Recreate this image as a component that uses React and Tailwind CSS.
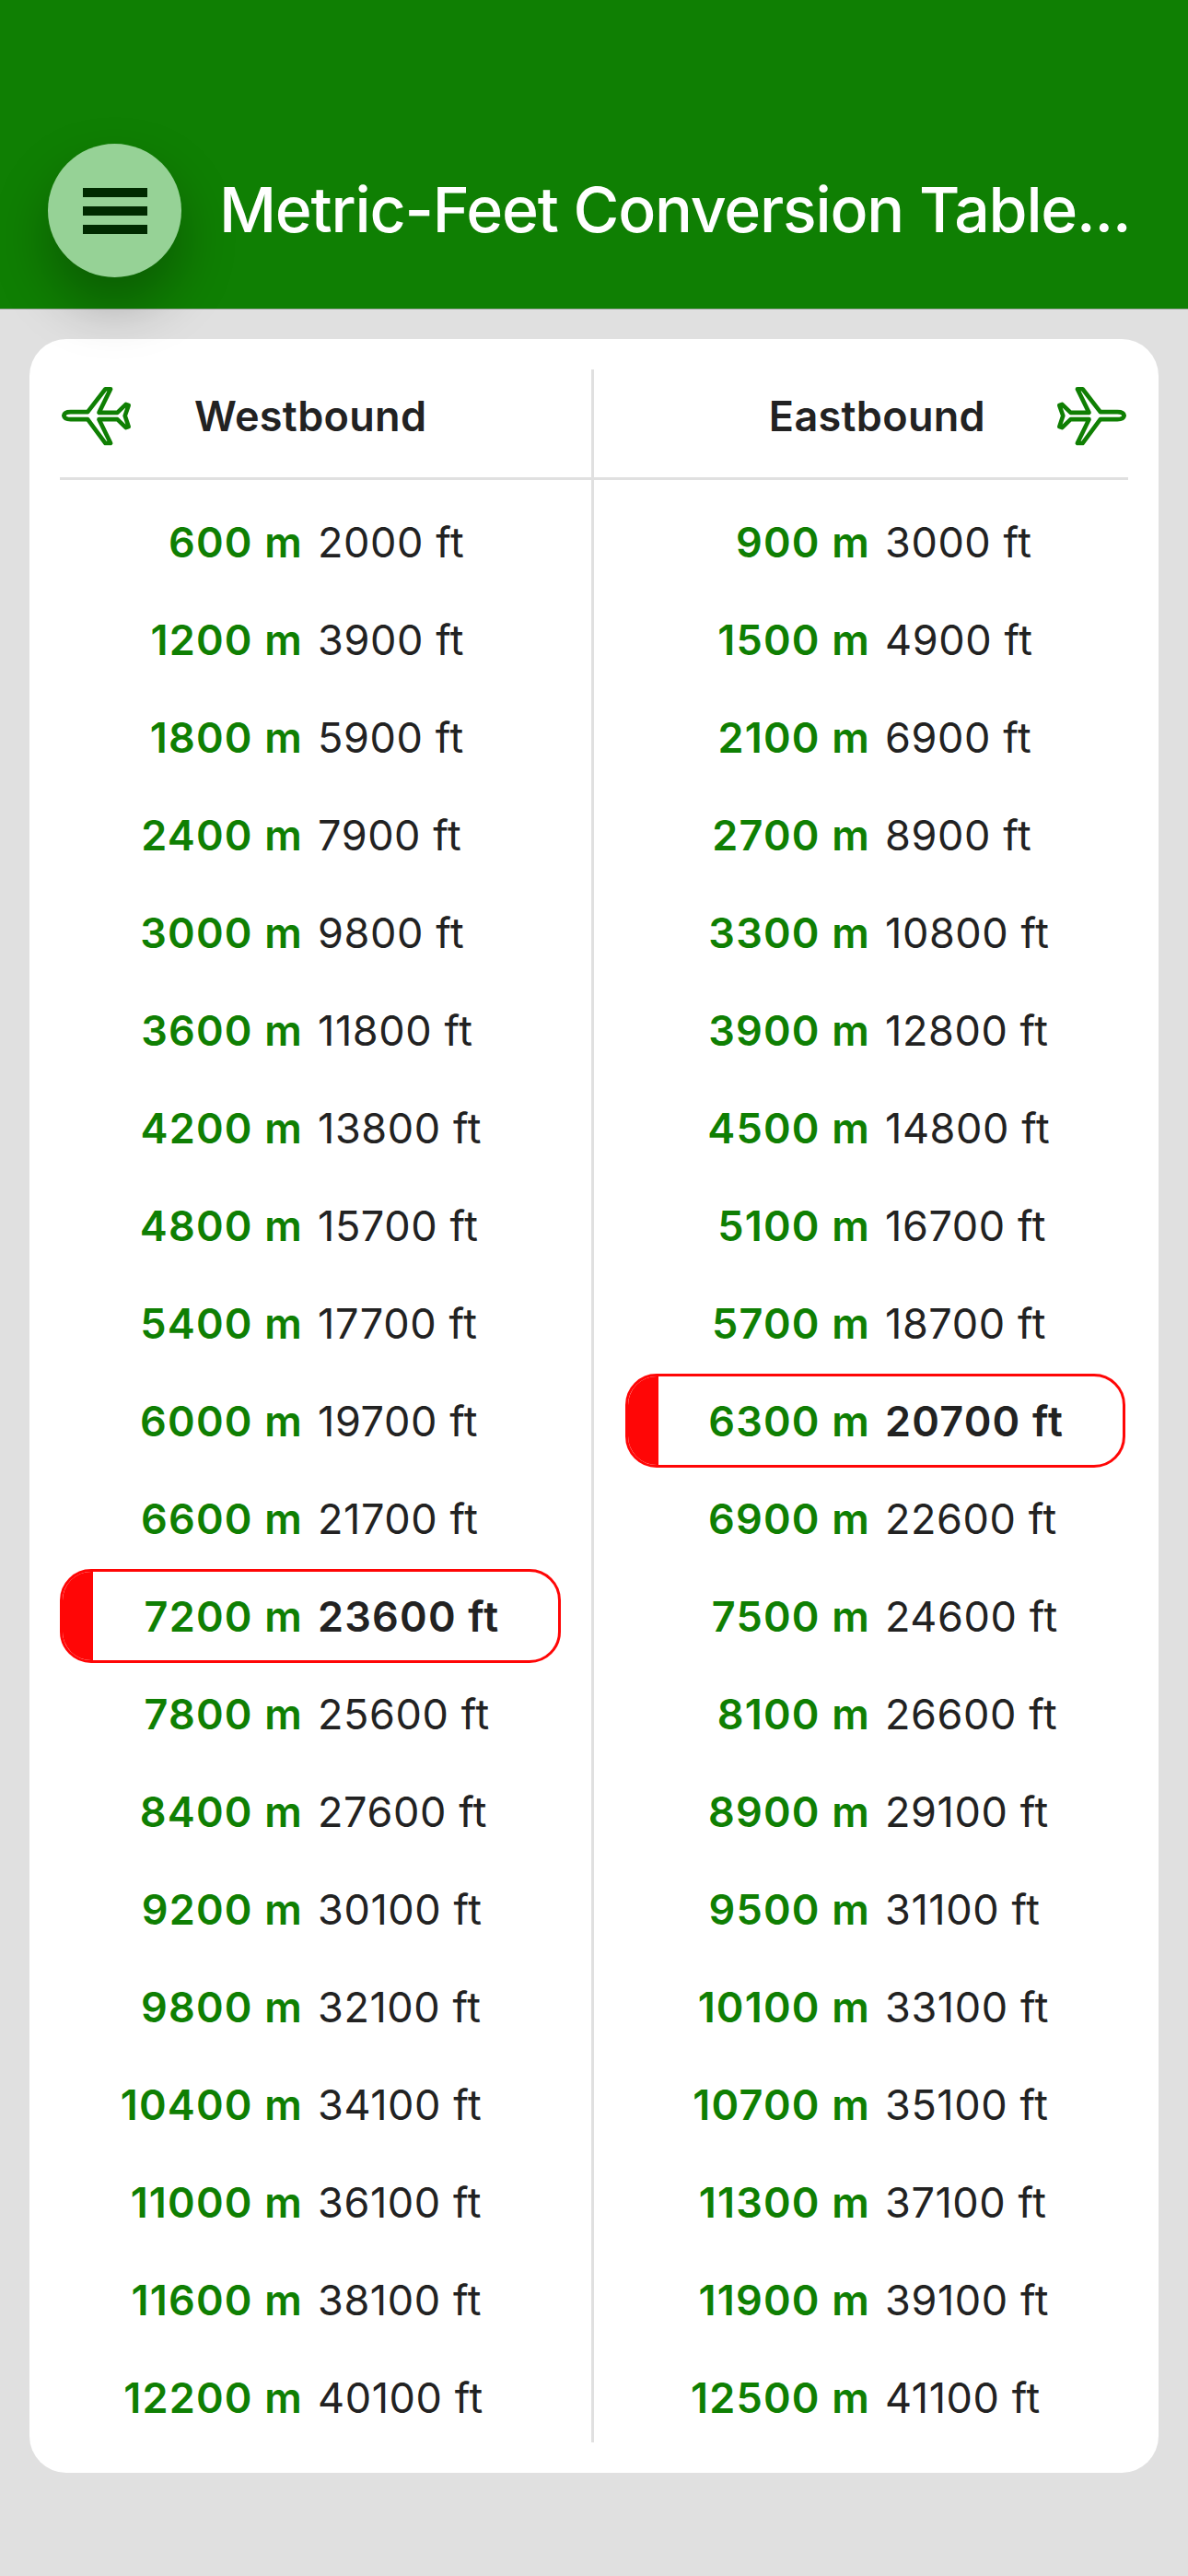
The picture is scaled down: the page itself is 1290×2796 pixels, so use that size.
const westbound = [
  ['600 m', '2000 ft'], ['1200 m', '3900 ft'], ['1800 m', '5900 ft'], ['2400 m', '7900 ft'],
  ['3000 m', '9800 ft'], ['3600 m', '11800 ft'], ['4200 m', '13800 ft'], ['4800 m', '15700 ft'],
  ['5400 m', '17700 ft'], ['6000 m', '19700 ft'], ['6600 m', '21700 ft'], ['7200 m', '23600 ft'],
  ['7800 m', '25600 ft'], ['8400 m', '27600 ft'], ['9200 m', '30100 ft'], ['9800 m', '32100 ft'],
  ['10400 m', '34100 ft'], ['11000 m', '36100 ft'], ['11600 m', '38100 ft'], ['12200 m', '40100 ft'],
];

const eastbound = [
  ['900 m', '3000 ft'], ['1500 m', '4900 ft'], ['2100 m', '6900 ft'], ['2700 m', '8900 ft'],
  ['3300 m', '10800 ft'], ['3900 m', '12800 ft'], ['4500 m', '14800 ft'], ['5100 m', '16700 ft'],
  ['5700 m', '18700 ft'], ['6300 m', '20700 ft'], ['6900 m', '22600 ft'], ['7500 m', '24600 ft'],
  ['8100 m', '26600 ft'], ['8900 m', '29100 ft'], ['9500 m', '31100 ft'], ['10100 m', '33100 ft'],
  ['10700 m', '35100 ft'], ['11300 m', '37100 ft'], ['11900 m', '39100 ft'], ['12500 m', '41100 ft'],
];

// outline of a plane pointing right, flipped for the westbound column
const Plane = ({ flip }) => (
  <svg
    viewBox="285 228 244 206"
    className={`w-[81px] h-[69px] shrink-0 ${flip ? '-scale-x-100 -ml-[2px]' : '-mr-[2px]'}`}
    fill="none"
    stroke="#0f7f03"
    strokeWidth="14"
    strokeLinejoin="round"
  >
    <path d="M510 330 Q508 318 488 318 L432 318 L374 243 L357 243 L395 320 L335 320 L307 293 L298 296 L310 330 L298 366 L307 369 L335 342 L395 342 L357 420 L374 420 L432 342 L488 342 Q508 342 510 330 Z" />
  </svg>
);

const Row = ({ metres, feet, active, columns }) => (
  <div
    className={`relative h-[102px] shrink-0 grid ${columns} gap-x-[19px] items-center rounded-[34px] overflow-hidden border-[3px] ${
      active ? 'border-[#ff0606]' : 'border-transparent'
    }`}
  >
    {active && <div className="absolute left-0 top-0 bottom-0 w-[33px] bg-[#ff0606]" />}
    <span className="text-right font-semibold text-[#0f7f03] tracking-[1.2px] -ml-[3px]">{metres}</span>
    <span className={`-ml-[3px] ${active ? 'font-semibold tracking-[1.2px]' : 'tracking-[0.6px]'}`}>{feet}</span>
  </div>
);

const App = () => {
  return (
    <div className="min-h-[2796px] bg-[#e0e0e0] text-[45px] leading-none text-[#222222] font-['Inter',sans-serif]">
      <div className="h-[336px] bg-[#0f7f03] border-b border-[#aaaaaa] flex items-end pl-[52px] pb-[34px]">
        <button className="relative z-10 w-[145px] h-[145px] rounded-full bg-[#96d296] shadow-[0_30px_60px_rgba(0,0,0,0.28)] flex flex-col items-center justify-center gap-[10px]">
          <span className="w-[70px] h-[10px] bg-[#002a00]" />
          <span className="w-[70px] h-[10px] bg-[#002a00]" />
          <span className="w-[70px] h-[10px] bg-[#002a00]" />
        </button>
        <h1 className="ml-[41px] h-[145px] pb-[3px] flex items-center text-[68px] font-medium tracking-[-1.2px] text-white whitespace-nowrap">
          Metric-Feet Conversion Table...
        </h1>
      </div>

      <div className="mx-[32px] mt-[32px] bg-white rounded-[40px] pt-[33px] pb-[33px] px-[33px] grid grid-cols-2">
        <div className="h-[2250px] border-r-[3px] border-[#e0e0e0]">
          <div className="h-[120px] border-b-[3px] border-[#e0e0e0] flex items-center pb-[16px]">
            <Plane flip />
            <span className="ml-[67px] font-semibold tracking-[0.3px]">Westbound</span>
          </div>
          <div className="pt-[16px] pr-[33px] flex flex-col gap-[4px]">
            {westbound.map(([metres, feet], i) => (
              <Row key={metres} metres={metres} feet={feet} active={i === 11} columns="grid-cols-[261px_1fr]" />
            ))}
          </div>
        </div>

        <div className="h-[2250px]">
          <div className="h-[120px] border-b-[3px] border-[#e0e0e0] flex items-center justify-end pb-[16px]">
            <span className="mr-[76px] font-semibold tracking-[0.3px]">Eastbound</span>
            <Plane />
          </div>
          <div className="pt-[16px] pl-[34px] pr-[3px] flex flex-col gap-[4px]">
            {eastbound.map(([metres, feet], i) => (
              <Row key={metres} metres={metres} feet={feet} active={i === 9} columns="grid-cols-[263px_1fr]" />
            ))}
          </div>
        </div>
      </div>
    </div>
  );
};

export default App;
